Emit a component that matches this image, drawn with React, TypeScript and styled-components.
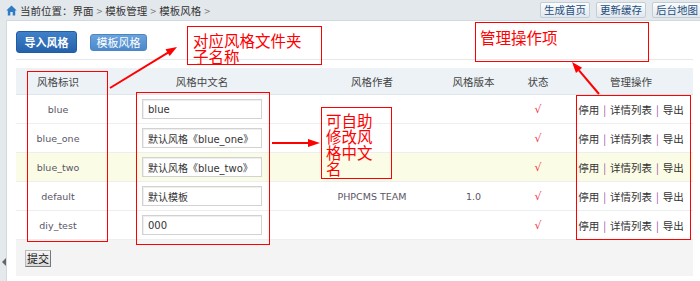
import styled, { createGlobalStyle } from 'styled-components'

const GlobalStyle = createGlobalStyle`
  html, body {
    margin: 0;
    padding: 0;
    background: #e4e9ec;
  }
  body {
    font-family: "DejaVu Sans", "Noto Sans CJK SC", sans-serif;
  }
`

const cjk = `"Noto Sans CJK SC", "DejaVu Sans", sans-serif`

interface StyleRow {
  id: string
  name: string
  author?: string
  version?: string
  highlight?: boolean
}

const rows: StyleRow[] = [
  { id: 'blue', name: 'blue' },
  { id: 'blue_one', name: '默认风格《blue_one》' },
  { id: 'blue_two', name: '默认风格《blue_two》', highlight: true },
  { id: 'default', name: '默认模板', author: 'PHPCMS TEAM', version: '1.0' },
  { id: 'diy_test', name: '000' },
]

const columns = [
  { title: '风格标识', width: 84 },
  { title: '风格中文名', width: 204 },
  { title: '风格作者', width: 136 },
  { title: '风格版本', width: 67 },
  { title: '状态', width: 62 },
  { title: '管理操作', width: 124 },
]

const Page = styled.div`
  position: relative;
  width: 700px;
  height: 281px;
  overflow: hidden;
  display: flex;
  flex-direction: column;
`

const TopBar = styled.div`
  height: 20px;
  display: flex;
  align-items: center;
  justify-content: space-between;
  padding-left: 6px;
  background: #e3e8ec;
`

const Crumb = styled.div`
  display: flex;
  align-items: center;
  gap: 3px;
  font-family: ${cjk};
  font-size: 10.5px;
  color: #333;
`

const Gt = styled.span`
  color: #777;
  margin: 0 3px;
`

const Shortcuts = styled.div`
  display: flex;
  gap: 6px;
  margin-right: -2px;
`

const ShortcutButton = styled.span`
  height: 14px;
  line-height: 14px;
  padding: 0 3px;
  font-family: ${cjk};
  font-size: 10.5px;
  color: #1f4f7e;
  background: linear-gradient(#fbfcfd, #e1e8ee);
  border: 1px solid #c4cdd5;
  border-radius: 2px;
`

const Body = styled.div`
  flex: 1;
  display: flex;
`

const SideStrip = styled.div`
  width: 6px;
  display: flex;
  flex-direction: column;
  justify-content: flex-end;
  padding-bottom: 15px;
  box-sizing: border-box;
`

const Triangle = styled.span`
  width: 0;
  height: 0;
  margin-left: 2px;
  border-right: 4px solid #666;
  border-top: 4px solid transparent;
  border-bottom: 4px solid transparent;
`

const Panel = styled.div`
  flex: 1;
  background: #fff;
  border-left: 1px solid #d3dadf;
  border-top: 1px solid #d3dadf;
  padding: 10px 7px 0 9px;
`

const Toolbar = styled.div`
  display: flex;
  align-items: center;
  gap: 13px;
  height: 22px;
  padding-bottom: 6px;
  border-bottom: 1px solid #e6e9eb;
  margin-bottom: 8px;
`

const TabButton = styled.span<{ $active?: boolean }>`
  display: inline-flex;
  align-items: center;
  justify-content: center;
  box-sizing: border-box;
  font-family: ${cjk};
  font-size: 11px;
  color: #fff;
  border-radius: 3px;
  width: ${p => (p.$active ? 61 : 57)}px;
  height: ${p => (p.$active ? 22 : 17)}px;
  font-weight: ${p => (p.$active ? 700 : 400)};
  background: ${p =>
    p.$active ? 'linear-gradient(#3f80c8, #2462ab)' : 'linear-gradient(#6aa2dc, #4c8acb)'};
  border: 1px solid ${p => (p.$active ? '#1f5ca3' : '#4a86c6')};
`

const Table = styled.table`
  width: 677px;
  table-layout: fixed;
  border-collapse: collapse;
`

const HeadCell = styled.th`
  height: 26px;
  padding: 0;
  background: #edf2f6;
  border-bottom: 1px solid #dfe6eb;
  font-family: ${cjk};
  font-size: 10.5px;
  font-weight: 400;
  color: #444;
  text-align: center;
`

const Row = styled.tr<{ $highlight?: boolean }>`
  height: 29px;
  background: ${p => (p.$highlight ? '#fbfce6' : '#fff')};
  border-bottom: 1px solid #eceeef;
`

const Cell = styled.td`
  padding: 0;
  text-align: center;
  font-size: 9.5px;
  color: #5a5566;
`

const NameInput = styled.input`
  box-sizing: border-box;
  width: 120px;
  height: 20px;
  padding: 0 0 0 5px;
  border: 1px solid #d2d2d2;
  box-shadow: inset 1px 1px 1px #eee;
  font-family: "DejaVu Sans", "Noto Sans CJK SC", sans-serif;
  font-size: 10px;
  color: #333;
  outline: none;
`

const Check = styled.span`
  color: #f0434f;
  font-size: 11px;
`

const Actions = styled.span`
  font-family: ${cjk};
  font-size: 10.5px;
  color: #333;
`

const Sep = styled.span`
  color: #a0519b;
  margin: 0 4px;
`

const SubmitBar = styled.div`
  height: 36px;
  display: flex;
  align-items: center;
  padding-left: 9px;
  background: #f4f4f4;
  width: 668px;
`

const SubmitButton = styled.span`
  display: inline-flex;
  align-items: center;
  justify-content: center;
  box-sizing: border-box;
  width: 26px;
  height: 17px;
  font-family: ${cjk};
  font-size: 11px;
  color: #111;
  background: linear-gradient(#f6f6f6, #d9d9d9);
  border: 1px solid #777;
  border-top-color: #bbb;
  border-left-color: #bbb;
`

const NoteBox = styled.div<{ $x: number; $y: number; $w: number; $h: number; $pad?: string }>`
  position: absolute;
  left: ${p => p.$x}px;
  top: ${p => p.$y}px;
  width: ${p => p.$w}px;
  height: ${p => p.$h}px;
  box-sizing: border-box;
  border: 1px solid #f00;
  padding: ${p => p.$pad || '0'};
`

const NoteLine = styled.div`
  height: 16px;
  line-height: 16px;
  font-family: ${cjk};
  font-size: 15.5px;
  color: #f00;
  white-space: nowrap;
`

const Arrows = styled.svg`
  position: absolute;
  left: 0;
  top: 0;
  pointer-events: none;
`

const HomeIcon = () => (
  <svg width="11" height="11" viewBox="0 0 11 11">
    <path d="M5.5 0.5 L0.3 5.4 L1.8 5.4 L1.8 10.5 L4.3 10.5 L4.3 7 L6.7 7 L6.7 10.5 L9.2 10.5 L9.2 5.4 L10.7 5.4 Z" fill="#2f7bc4" />
  </svg>
)

const App = () => {
  return (
    <>
      <GlobalStyle />
      <Page>
        <TopBar>
          <Crumb>
            <HomeIcon />
            <span>
              当前位置：界面<Gt>&gt;</Gt>模板管理<Gt>&gt;</Gt>模板风格<Gt>&gt;</Gt>
            </span>
          </Crumb>
          <Shortcuts>
            <ShortcutButton>生成首页</ShortcutButton>
            <ShortcutButton>更新缓存</ShortcutButton>
            <ShortcutButton>后台地图</ShortcutButton>
          </Shortcuts>
        </TopBar>
        <Body>
          <SideStrip>
            <Triangle />
          </SideStrip>
          <Panel>
            <Toolbar>
              <TabButton $active>导入风格</TabButton>
              <TabButton>模板风格</TabButton>
            </Toolbar>
            <Table>
              <colgroup>
                {columns.map(c => (
                  <col key={c.title} style={{ width: c.width }} />
                ))}
              </colgroup>
              <thead>
                <tr>
                  {columns.map(c => (
                    <HeadCell key={c.title}>{c.title}</HeadCell>
                  ))}
                </tr>
              </thead>
              <tbody>
                {rows.map(r => (
                  <Row key={r.id} $highlight={r.highlight}>
                    <Cell>{r.id}</Cell>
                    <Cell>
                      <NameInput value={r.name} readOnly />
                    </Cell>
                    <Cell>{r.author}</Cell>
                    <Cell>{r.version}</Cell>
                    <Cell>
                      <Check>√</Check>
                    </Cell>
                    <Cell>
                      <Actions>
                        停用<Sep>|</Sep>详情列表<Sep>|</Sep>导出
                      </Actions>
                    </Cell>
                  </Row>
                ))}
              </tbody>
            </Table>
            <SubmitBar>
              <SubmitButton>提交</SubmitButton>
            </SubmitBar>
          </Panel>
        </Body>

        <NoteBox $x={187} $y={26} $w={135} $h={39} $pad="5px 0 0 5px">
          <NoteLine>对应风格文件夹</NoteLine>
          <NoteLine>子名称</NoteLine>
        </NoteBox>
        <NoteBox $x={475} $y={22} $w={174} $h={40} $pad="6px 0 0 4px">
          <NoteLine>管理操作项</NoteLine>
        </NoteBox>
        <NoteBox $x={321} $y={107} $w={71} $h={72} $pad="4px 0 0 4px">
          <NoteLine>可自助</NoteLine>
          <NoteLine>修改风</NoteLine>
          <NoteLine>格中文</NoteLine>
          <NoteLine>名</NoteLine>
        </NoteBox>
        <NoteBox $x={27} $y={71} $w={81} $h={171} />
        <NoteBox $x={136} $y={92} $w={134} $h={153} />
        <NoteBox $x={576} $y={95} $w={115} $h={145} />

        <Arrows width="700" height="281" viewBox="0 0 700 281">
          <g stroke="#f00" strokeWidth="2" fill="none">
            <line x1="110" y1="88" x2="168" y2="52.7" />
            <line x1="272" y1="143" x2="309" y2="143" />
            <line x1="599" y1="94" x2="579" y2="70.4" />
          </g>
          <g fill="#f00">
            <polygon points="177,47 169.7,56.1 165.5,49.3" />
            <polygon points="320,143 308,139 308,147" />
            <polygon points="572,62 582.1,67.8 576,73" />
          </g>
        </Arrows>
      </Page>
    </>
  )
}

export default App
